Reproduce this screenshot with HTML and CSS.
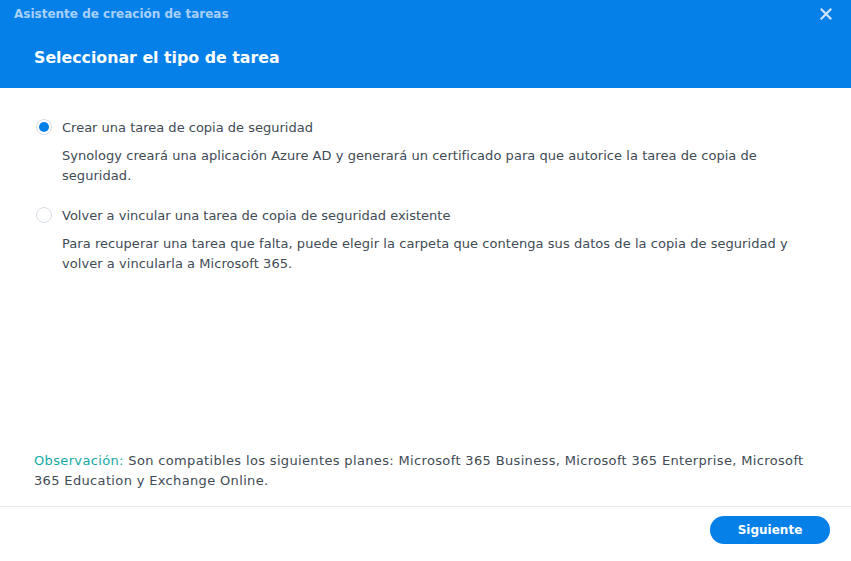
FILE: index.html
```html
<!DOCTYPE html>
<html lang="es">
<head>
<meta charset="utf-8">
<title>Asistente de creación de tareas</title>
<link rel="stylesheet" href="styles.css">
</head>
<body>
<div class="dialog">
  <header class="header">
    <div class="topbar">
      <span class="wtitle">Asistente de creación de tareas</span>
      <span class="close" aria-label="Cerrar">
        <svg width="12" height="12" viewBox="0 0 12 12"><path d="M1.5 1.5 L10.5 10.5 M10.5 1.5 L1.5 10.5" stroke="#cfe4fb" stroke-width="2.2" stroke-linecap="square"/></svg>
      </span>
    </div>
    <h1 class="heading">Seleccionar el tipo de tarea</h1>
  </header>
  <main class="body">
    <div class="options">
      <div class="option">
        <div class="row">
          <span class="radio checked"></span>
          <span class="label">Crear una tarea de copia de seguridad</span>
        </div>
        <p class="desc">Synology creará una aplicación Azure AD y generará un certificado para que autorice la tarea de copia de seguridad.</p>
      </div>
      <div class="option">
        <div class="row">
          <span class="radio"></span>
          <span class="label">Volver a vincular una tarea de copia de seguridad existente</span>
        </div>
        <p class="desc">Para recuperar una tarea que falta, puede elegir la carpeta que contenga sus datos de la copia de seguridad y volver a vincularla a Microsoft 365.</p>
      </div>
    </div>
    <p class="note"><span class="note-key">Observación:</span> Son compatibles los siguientes planes: Microsoft 365 Business, Microsoft 365 Enterprise, Microsoft 365 Education y Exchange Online.</p>
  </main>
  <footer class="footer">
    <button class="btn">Siguiente</button>
  </footer>
</div>
</body>
</html>
```
FILE: styles.css
```css
html, body {
  margin: 0;
  padding: 0;
  background: #ffffff;
}
body {
  font-family: "DejaVu Sans", Verdana, sans-serif;
  color: #414b55;
}
.dialog {
  width: 851px;
  height: 561px;
  display: flex;
  flex-direction: column;
}
.header {
  background: #0680e9;
  height: 88px;
  box-sizing: border-box;
  padding: 0 20px 0 14px;
}
.topbar {
  height: 28px;
  display: flex;
  align-items: center;
  justify-content: space-between;
}
.wtitle {
  font-size: 12px;
  font-weight: bold;
  color: #a9d0f8;
}
.close {
  display: flex;
  width: 12px;
  height: 12px;
  margin-right: -1px;
}
.heading {
  margin: 16px 0 0 20px;
  font-size: 15.8px;
  font-weight: bold;
  color: #ffffff;
  line-height: 28px;
}
.body {
  flex: 1;
  padding: 0 34px;
  display: flex;
  flex-direction: column;
  justify-content: space-between;
}
.options {
  padding-top: 27px;
  display: flex;
  flex-direction: column;
  gap: 18px;
}
.row {
  display: flex;
  align-items: center;
  gap: 10px;
  height: 24px;
  margin-left: 2px;
}
.radio {
  width: 16px;
  height: 16px;
  box-sizing: border-box;
  border-radius: 50%;
  border: 1px solid #d6dee7;
  background: #fff;
  display: flex;
  align-items: center;
  justify-content: center;
}
.radio.checked::after {
  content: "";
  width: 10px;
  height: 10px;
  border-radius: 50%;
  background: #0680e9;
}
.label {
  font-size: 13px;
}
.desc {
  margin: 7px 0 0 28px;
  font-size: 13px;
  line-height: 19.5px;
  letter-spacing: 0.05px;
}
.note {
  margin: 0 0 15px;
  font-size: 13px;
  line-height: 20px;
  letter-spacing: 0.35px;
}
.note-key {
  color: #14a9a4;
}
.footer {
  border-top: 1px solid #e3e9ef;
  height: 55px;
  box-sizing: border-box;
  display: flex;
  justify-content: flex-end;
  align-items: flex-start;
  padding: 9px 21px 0 0;
}
.btn {
  width: 120px;
  height: 28px;
  border: none;
  border-radius: 14px;
  background: #0680e9;
  color: #ffffff;
  font-family: "DejaVu Sans", Verdana, sans-serif;
  font-size: 12px;
  font-weight: bold;
  padding: 0;
}
```
